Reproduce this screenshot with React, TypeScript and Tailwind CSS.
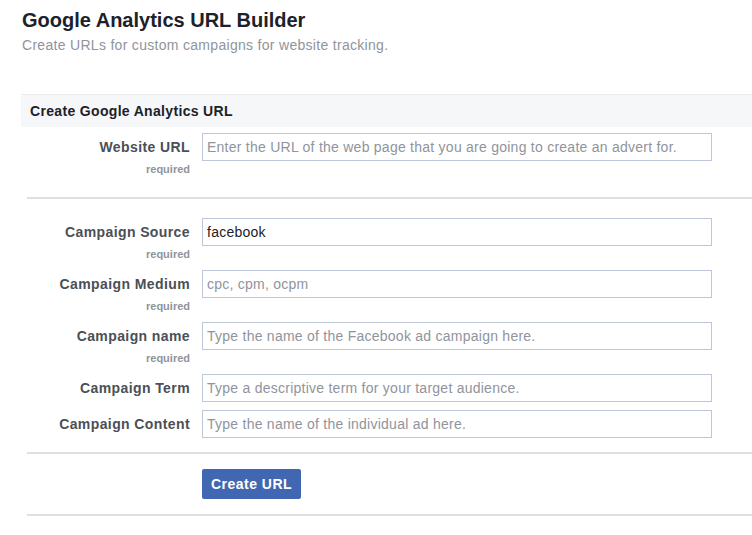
import React from "react";

type Row = { label: string; placeholder?: string; value?: string; required?: boolean };

const rows: Row[] = [
  { label: "Campaign Source", value: "facebook", required: true },
  { label: "Campaign Medium", placeholder: "cpc, cpm, ocpm", required: true },
  { label: "Campaign name", placeholder: "Type the name of the Facebook ad campaign here.", required: true },
  { label: "Campaign Term", placeholder: "Type a descriptive term for your target audience." },
  { label: "Campaign Content", placeholder: "Type the name of the individual ad here." },
];

function FieldRow({ label, placeholder, value, required }: Row) {
  return (
    <div className="flex">
      <div className="w-[190px] text-right">
        <div className="text-[14px] leading-[28px] font-bold tracking-[0.4px] text-[#4b4f56]">{label}</div>
        {required && (
          <div className="text-[11px] leading-[16px] font-bold text-[#90949c]">required</div>
        )}
      </div>
      <input
        className="ml-[12px] w-[510px] h-[28px] border border-[#bdc7d8] px-[4px] text-[14px] tracking-[0.25px] text-[#1d2129] placeholder:text-[#90949c] outline-none bg-white font-['Liberation_Sans',Arial,sans-serif]"
        placeholder={placeholder}
        defaultValue={value}
      />
    </div>
  );
}

export default function App() {
  return (
    <div className="w-[752px] h-[535px] overflow-hidden bg-white font-['Liberation_Sans',Arial,sans-serif]">
      <div className="pl-[22px] pt-[8px]">
        <h1 className="text-[20px] leading-[24px] font-bold text-[#1d2129]">Google Analytics URL Builder</h1>
        <p className="mt-[4px] text-[14px] leading-[18px] tracking-[0.3px] text-[#90949c]">
          Create URLs for custom campaigns for website tracking.
        </p>
      </div>
      <div className="mt-[40px] ml-[21px] border-t border-[#e9ebee] bg-[#f6f7f9] h-[33px] pl-[9px]">
        <div className="text-[14px] leading-[32px] font-bold tracking-[0.33px] text-[#1d2129]">
          Create Google Analytics URL
        </div>
      </div>
      <div className="pt-[6px]">
        <FieldRow
          label="Website URL"
          placeholder="Enter the URL of the web page that you are going to create an advert for."
          required
        />
        <div className="mt-[20px] ml-[27px] h-[2px] bg-[#dddfe2]" />
        <div className="mt-[19px] flex flex-col gap-[8px]">
          {rows.map((r) => (
            <FieldRow key={r.label} {...r} />
          ))}
        </div>
        <div className="mt-[14px] ml-[27px] h-[2px] bg-[#dddfe2]" />
        <div className="mt-[15px] pl-[202px]">
          <button className="w-[99px] h-[30px] rounded-[2px] bg-[#4267b2] text-white text-[14px] font-bold tracking-[0.5px]">
            Create URL
          </button>
        </div>
        <div className="mt-[15px] ml-[27px] h-[2px] bg-[#dddfe2]" />
      </div>
    </div>
  );
}
